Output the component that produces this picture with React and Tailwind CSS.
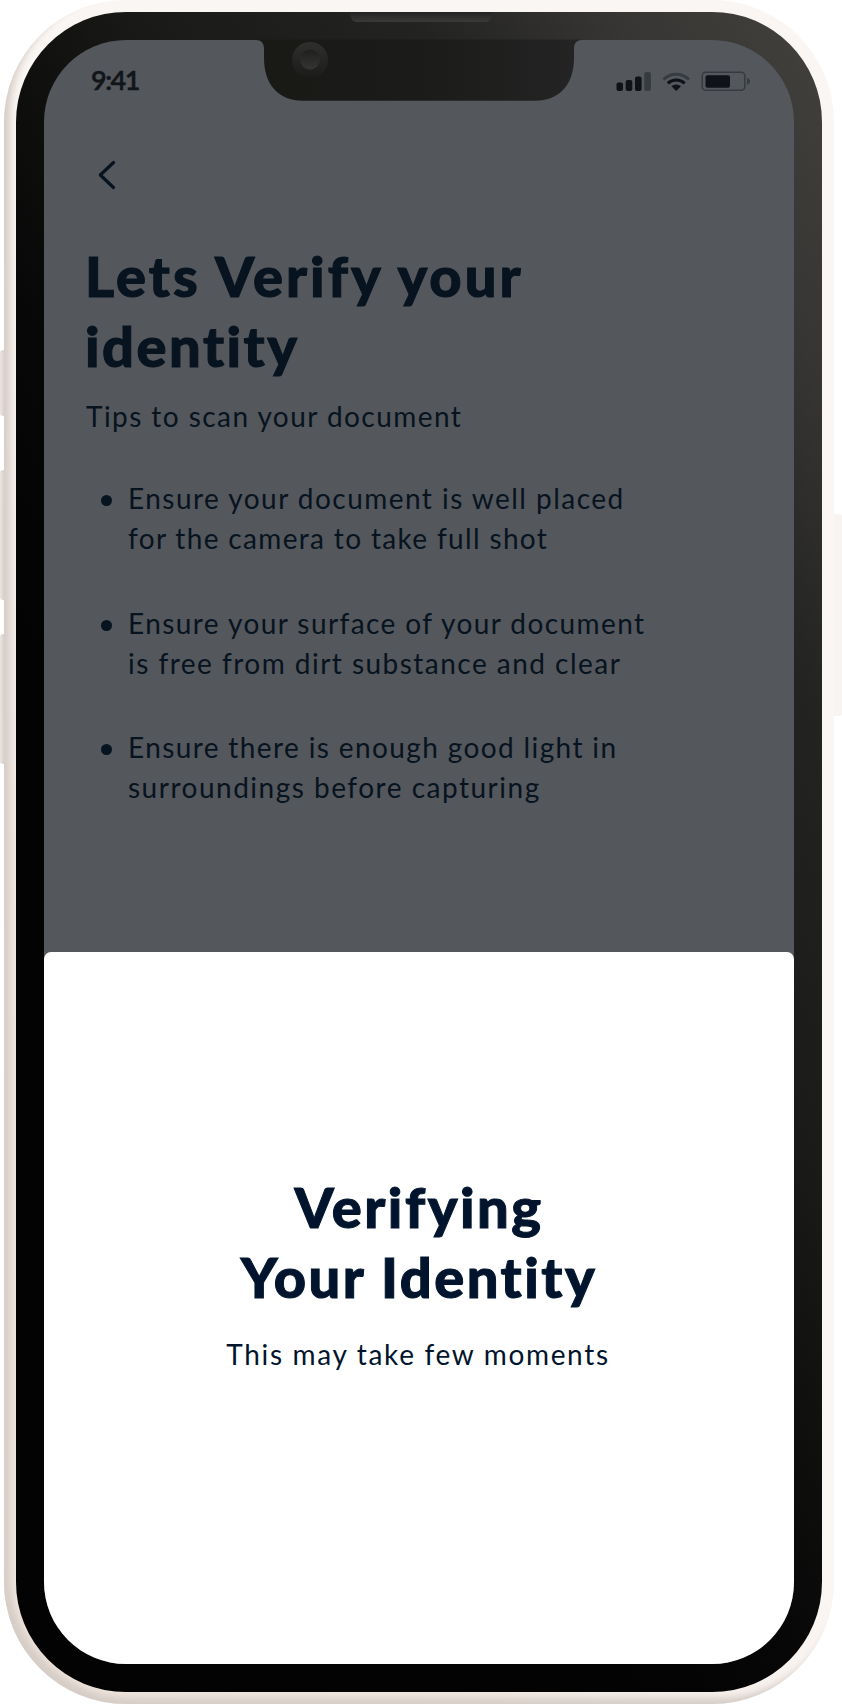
const tips = [
  [
    { text: 'Ensure your document is well placed', track: 'tracking-[1.46px]' },
    { text: 'for the camera to take full shot', track: 'tracking-[1.34px]' },
  ],
  [
    { text: 'Ensure your surface of your document', track: 'tracking-[1.42px]' },
    { text: 'is free from dirt substance and clear', track: 'tracking-[1.47px]' },
  ],
  [
    { text: 'Ensure there is enough good light in', track: 'tracking-[1.38px]' },
    { text: 'surroundings before capturing', track: 'tracking-[1.5px]' },
  ],
];

function Notch() {
  return (
    <svg className="absolute left-[250px] top-3" width="338" height="90" viewBox="250 12 338 90">
      <defs>
        <linearGradient id="notch" x1="0" y1="0" x2="1" y2="0">
          <stop offset="0" stopColor="#191916" />
          <stop offset="0.5" stopColor="#1b1b1a" />
          <stop offset="1" stopColor="#242424" />
        </linearGradient>
        <linearGradient id="speaker" x1="0" y1="0" x2="0" y2="1">
          <stop offset="0" stopColor="#232323" />
          <stop offset="1" stopColor="#3a3a39" />
        </linearGradient>
        <linearGradient id="camera" x1="0" y1="0" x2="0" y2="1">
          <stop offset="0" stopColor="#2f2f2d" />
          <stop offset="1" stopColor="#1b1b19" />
        </linearGradient>
        <linearGradient id="lens" x1="0" y1="0" x2="0" y2="1">
          <stop offset="0" stopColor="#1f1f1e" />
          <stop offset="1" stopColor="#353534" />
        </linearGradient>
      </defs>
      <path
        d="M256 39.5V40C261 40 264 43 264 49V58C264 84 278 100.700 303 100.700H535C560 100.700 574 84 574 58V49C574 43 577 40 582 40V39.500Z"
        fill="url(#notch)"
      />
      <path d="M350 12H492C492 18 490 22 485 22H357C352 22 350 18 350 12Z" fill="url(#speaker)" />
      <circle cx="310" cy="60" r="18" fill="url(#camera)" />
      <circle cx="310" cy="59.500" r="10" fill="url(#lens)" />
    </svg>
  );
}

function StatusIcons() {
  return (
    <svg width="136" height="24" viewBox="614 70 136 24" fill="#0f1318">
      <rect x="616.500" y="82.500" width="6.500" height="8.500" rx="2" />
      <rect x="625.700" y="80" width="6.600" height="11" rx="2" />
      <rect x="635" y="76.500" width="6.600" height="14.500" rx="2" />
      <rect x="644.300" y="72" width="6.600" height="19" rx="2" fill="#363b40" />
      <g fill="none" strokeLinecap="butt">
        <path d="M663.500 79.500A18 18 0 0 1 688.900 79.500" stroke="#363b40" strokeWidth="3" />
        <path d="M667.800 83.300A12.500 12.500 0 0 1 684.700 83.300" stroke="#0f1318" strokeWidth="3" />
      </g>
      <path d="M671.500 86.300A7 7 0 0 1 681 86.300L676.200 91Z" />
      <rect x="702.200" y="72.200" width="42.600" height="18" rx="3.500" fill="none" stroke="#363b40" strokeWidth="1.500" />
      <rect x="705.500" y="75.200" width="24.500" height="12.500" rx="2" />
      <path d="M747 78C751 79 751 83.500 747 84.500Z" fill="#363b40" />
    </svg>
  );
}

export default function App() {
  return (
    <div className="relative flex h-[1704px] w-[842px] justify-start overflow-hidden bg-white pl-1 font-['Lato','Liberation_Sans',sans-serif]">
      <div className="absolute left-0 top-[350px] h-[66px] w-1 rounded-l-[3px] bg-linear-to-r from-[#ece4e2] to-[#dcd2cf]" />
      <div className="absolute left-0 top-[470px] h-[130px] w-1 rounded-l-[3px] bg-linear-to-r from-[#ebe5e0] to-[#d9d0ca]" />
      <div className="absolute left-0 top-[634px] h-[130px] w-1 rounded-l-[3px] bg-linear-to-r from-[#ebe5e0] to-[#d9d0ca]" />
      <div className="absolute left-[834px] top-[514px] h-[202px] w-2 rounded-r-[2px] bg-[#f8f4f1]" />

      <div className="relative h-[1704px] w-[830px] rounded-[122px] bg-[linear-gradient(240deg,#faf6f3_0%,#faf6f3_50%,#f0e7e0_75%,#efe4dc_100%)] p-3 shadow-[inset_7px_-7px_7px_-1px_#d6cdc7]">
        <div className="h-[1680px] w-[806px] rounded-[110px] bg-[linear-gradient(240deg,#42413e_0%,#363533_12%,#232322_23%,#1a1a18_38%,#0f0f0e_47%,#070707_55%,#030303_65%,#030303_100%)] p-7">
          <div className="flex h-[1624px] w-[750px] flex-col overflow-hidden rounded-[82px] bg-[#54575c]">
            <div className="flex h-[912px] shrink-0 flex-col text-[#07131f]">
              <div className="flex h-[79px] items-start justify-between pl-[47px] pr-[44px] pt-[20px]">
                <span className="pt-px text-[27px] font-semibold leading-[38px] tracking-[-1.5px] text-[#11151a] [-webkit-text-stroke:0.5px_#11151a]">9:41</span>
                <div className="pt-[10px]">
                  <StatusIcons />
                </div>
              </div>
              <div className="h-[121px] pl-[52px] pt-[38px]">
                <svg width="24" height="36" viewBox="0 0 24 36" fill="none" stroke="#07131f" strokeWidth="3.200" strokeLinecap="round" strokeLinejoin="round">
                  <path d="M17.500 5.500L4.300 18L17.500 30.500" />
                </svg>
              </div>
              <h1 className="pl-[41px] pt-px text-[56px] font-[900] leading-[70px] [-webkit-text-stroke:1px_#07131f]">
                <span className="block tracking-[3.050px]">Lets Verify your</span>
                <span className="block tracking-[2.500px]">identity</span>
              </h1>
              <p className="mt-[15px] pl-[42px] text-[28px] leading-[40px] tracking-[1.440px]">Tips to scan your document</p>
              <ul className="mt-[42px] flex flex-col gap-[44.600px] pl-[57px]">
                {tips.map((lines) => (
                  <li key={lines[0].text} className="flex">
                    <span className="mt-[17px] size-[11px] rounded-full bg-[#07131f]" />
                    <p className="ml-4 text-[28px] leading-[40px]">
                      {lines.map((line) => (
                        <span key={line.text} className={`block whitespace-nowrap ${line.track}`}>{line.text}</span>
                      ))}
                    </p>
                  </li>
                ))}
              </ul>
            </div>
            <div className="flex flex-1 flex-col items-center rounded-t-[7px] bg-white pt-[220px] text-center text-[#00152d]">
              <h2 className="text-[56px] font-[900] leading-[70px] [-webkit-text-stroke:1px_#00152d]">
                <span className="block tracking-[2.500px]">Verifying</span>
                <span className="block tracking-[2.500px]">Your Identity</span>
              </h2>
              <p className="mt-[22px] pr-[2px] text-[28px] leading-[40px] tracking-[1.670px]">This may take few moments</p>
            </div>
          </div>
        </div>
      </div>
      <Notch />
    </div>
  );
}
